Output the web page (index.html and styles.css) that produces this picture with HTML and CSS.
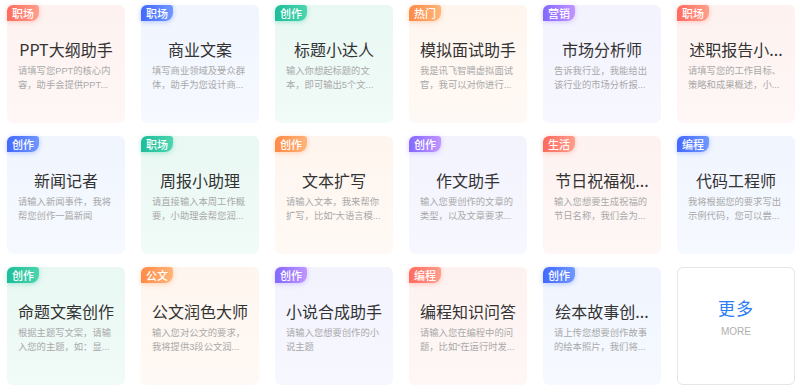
FILE: index.html
```html
<!DOCTYPE html>
<html lang="zh-CN">
<head>
<meta charset="utf-8">
<title>助手</title>
<link rel="stylesheet" href="styles.css">
</head>
<body>
<div class="grid">
  <div class="card red"><span class="tag">职场</span><div class="title">PPT大纲助手</div><div class="desc">请填写您PPT的核心内容，助手会提供PPT...</div></div>
  <div class="card blue"><span class="tag">职场</span><div class="title">商业文案</div><div class="desc">填写商业领域及受众群体，助手为您设计商...</div></div>
  <div class="card green"><span class="tag">创作</span><div class="title">标题小达人</div><div class="desc">输入你想起标题的文本，即可输出5个文...</div></div>
  <div class="card orange"><span class="tag">热门</span><div class="title">模拟面试助手</div><div class="desc">我是讯飞智聘虚拟面试官，我可以对你进行...</div></div>
  <div class="card purple"><span class="tag">营销</span><div class="title">市场分析师</div><div class="desc">告诉我行业，我能给出该行业的市场分析报...</div></div>
  <div class="card red"><span class="tag">职场</span><div class="title">述职报告小...</div><div class="desc">请填写您的工作目标、策略和成果概述，小...</div></div>

  <div class="card blue"><span class="tag">创作</span><div class="title">新闻记者</div><div class="desc">请输入新闻事件，我将帮您创作一篇新闻</div></div>
  <div class="card green"><span class="tag">职场</span><div class="title">周报小助理</div><div class="desc">请直接输入本周工作概要，小助理会帮您润...</div></div>
  <div class="card orange"><span class="tag">创作</span><div class="title">文本扩写</div><div class="desc">请输入文本，我来帮你扩写，比如“大语言模...</div></div>
  <div class="card purple"><span class="tag">创作</span><div class="title">作文助手</div><div class="desc">输入您要创作的文章的类型，以及文章要求...</div></div>
  <div class="card red"><span class="tag">生活</span><div class="title">节日祝福视...</div><div class="desc">输入您想要生成祝福的节日名称，我们会为...</div></div>
  <div class="card blue"><span class="tag">编程</span><div class="title">代码工程师</div><div class="desc">我将根据您的要求写出示例代码，您可以尝...</div></div>

  <div class="card green"><span class="tag">创作</span><div class="title">命题文案创作</div><div class="desc">根据主题写文案，请输入您的主题，如：显...</div></div>
  <div class="card orange"><span class="tag">公文</span><div class="title">公文润色大师</div><div class="desc">输入您对公文的要求，我将提供3段公文润...</div></div>
  <div class="card purple"><span class="tag">创作</span><div class="title">小说合成助手</div><div class="desc">请输入您想要创作的小说主题</div></div>
  <div class="card red"><span class="tag">编程</span><div class="title">编程知识问答</div><div class="desc">请输入您在编程中的问题，比如“在运行时发...</div></div>
  <div class="card blue"><span class="tag">创作</span><div class="title">绘本故事创...</div><div class="desc">请上传您想要创作故事的绘本照片，我们将...</div></div>
  <div class="more"><div class="more-title">更多</div><div class="more-sub">MORE</div></div>
</div>
</body>
</html>
```

FILE: styles.css
```css
* { box-sizing: border-box; }
html, body { margin: 0; padding: 0; background: #ffffff; }
body {
  font-family: "Liberation Sans", "Noto Sans CJK SC", sans-serif;
}
.grid {
  display: grid;
  grid-template-columns: repeat(6, 118px);
  grid-auto-rows: 118px;
  column-gap: 16px;
  row-gap: 13px;
  padding: 5px 7px;
}
.card {
  position: relative;
  border-radius: 6px;
  padding: 33px 11px 0 11px;
}
.tag {
  position: absolute;
  left: 0;
  top: 0;
  height: 16px;
  padding: 0 5px;
  font-size: 11px;
  line-height: 16px;
  color: #ffffff;
  font-family: "Noto Sans CJK SC", sans-serif;
  font-weight: 500;
  border-radius: 6px 3px 8px 0;
}
.title {
  margin: 0 -6px;
  font-family: "Noto Sans CJK SC", sans-serif;
  font-size: 16px;
  line-height: 22px;
  color: #333333;
  text-align: center;
  white-space: nowrap;
}
.desc {
  margin-top: 5px;
  font-size: 9.3px;
  line-height: 13.5px;
  color: #a9a9a9;
  display: -webkit-box;
  -webkit-box-orient: vertical;
  -webkit-line-clamp: 2;
  overflow: hidden;
  width: 95px;
}
.red { background: linear-gradient(180deg, #fdf2f0 0%, #fef7f6 100%); }
.red .tag { background: linear-gradient(90deg, #ff6b5e, #ff9e8c); box-shadow: 0 1px 5px rgba(255, 110, 95, 0.35); }
.blue { background: linear-gradient(180deg, #f0f5fe 0%, #f6f9ff 100%); }
.blue .tag { background: linear-gradient(90deg, #4468ff, #6f98ff); box-shadow: 0 1px 5px rgba(70, 110, 255, 0.35); }
.green { background: linear-gradient(180deg, #e9f8f3 0%, #f1fbf8 100%); }
.green .tag { background: linear-gradient(90deg, #1ebd98, #4bd5b0); box-shadow: 0 1px 5px rgba(30, 190, 150, 0.35); }
.orange { background: linear-gradient(180deg, #fef5ee 0%, #fff9f5 100%); }
.orange .tag { background: linear-gradient(90deg, #ff8a45, #ffb57a); box-shadow: 0 1px 5px rgba(255, 140, 70, 0.35); }
.purple { background: linear-gradient(180deg, #f3f3fe 0%, #f7f7ff 100%); }
.purple .tag { background: linear-gradient(90deg, #8468ff, #c195ff); box-shadow: 0 1px 5px rgba(140, 110, 255, 0.35); }
.more {
  border: 1px solid #e6e6e6;
  border-radius: 6px;
  background: #ffffff;
  display: flex;
  flex-direction: column;
  align-items: center;
  padding-top: 29px;
}
.more-title {
  font-family: "Noto Sans CJK SC", sans-serif;
  font-size: 17px;
  line-height: 22px;
  color: #2b7cf6;
  letter-spacing: 1px;
}
.more-sub {
  margin-top: 6px;
  font-size: 10px;
  line-height: 14px;
  color: #b0b0b0;
}
```
